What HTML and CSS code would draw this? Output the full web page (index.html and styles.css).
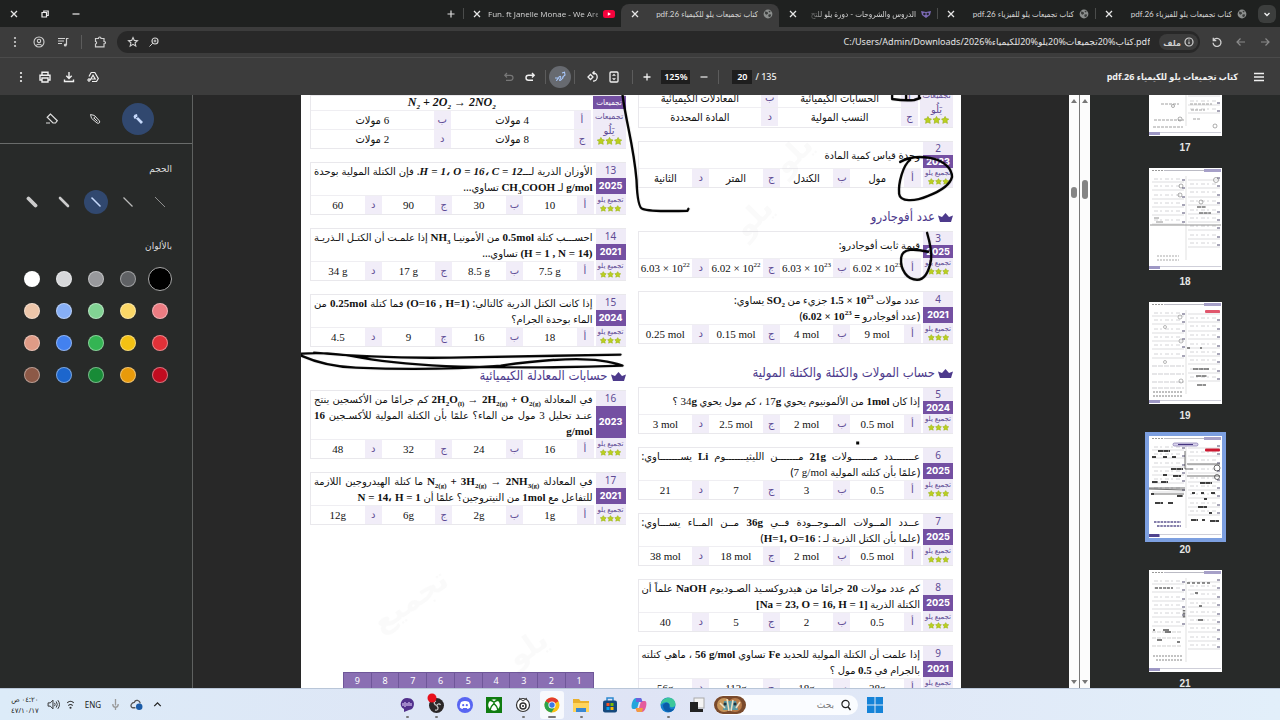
FILE: index.html
```html
<!DOCTYPE html>
<html lang="ar" dir="rtl">
<head>
<meta charset="utf-8">
<title>كتاب تجميعات يلو للكيمياء 26.pdf</title>
<link rel="stylesheet" href="styles.css">
</head>
<body>
<svg class="defs" aria-hidden="true">
  <symbol id="x" viewBox="0 0 10 10"><path d="M2 2l6 6M8 2l-6 6" fill="none" stroke="currentColor" stroke-width="1.3"/></symbol>
  <symbol id="globe" viewBox="0 0 10 10"><circle cx="5" cy="5" r="4.4" fill="#8c8f8e"/><path d="M2 2.5l2.5.4.6 1.6-1.5 1.2L2.2 5zM5.8 5.2l2.4.4-.6 2-1.6.7-.8-1.6zM6 1.4l1.8 1.4-1 .8L5.600 2.800z" fill="#3a3c3b"/></symbol>
  <symbol id="dots" viewBox="0 0 12 12"><circle cx="6" cy="2" r="1.100" fill="currentColor"/><circle cx="6" cy="6" r="1.100" fill="currentColor"/><circle cx="6" cy="10" r="1.100" fill="currentColor"/></symbol>
  <symbol id="star" viewBox="0 0 10 10"><path d="M5 .4l1.500 2.800 3.200.5-2.300 2.300.6 3.300L5 7.900 2 9.300l.6-3.300L.3 3.700l3.200-.5z" fill="#bccf1e" stroke="#98b41c" stroke-width=".8"/></symbol>
  <symbol id="stars" viewBox="0 0 32 10"><use href="#star" x="0" y="0" width="10" height="10"/><use href="#star" x="11" y="0" width="10" height="10"/><use href="#star" x="22" y="0" width="10" height="10"/></symbol>
  <symbol id="crown" viewBox="0 0 15 9"><path d="M0 2.500l4 1.500L7.500 0 11 4l4-1.500L13 9H2z" fill="#4d3a8c"/></symbol>
  <symbol id="thumb" viewBox="0 0 73 102">
    <rect width="73" height="102" fill="#fff"/>
    <path d="M15 2.500h40" stroke="#a9a9b5" stroke-width=".8"/><path d="M3 2.500h11" stroke="#999" stroke-width="1" stroke-dasharray="2 1"/>
    <rect x="55" y="1" width="17" height="3" fill="#a6a0c8"/>
    <path d="M0 98.500h72" stroke="#c3c3cf" stroke-width=".8"/><rect x="0" y="98" width="11" height="3" fill="#9d97c4"/>
    <path d="M37 8v84" stroke="#ccc" stroke-width=".6"/>
  </symbol>
  <symbol id="lines" viewBox="0 0 73 102">
    <g stroke="#b8b8bd" stroke-width=".5"><path d="M39 12h32M39 20h32M39 29h32M39 37h32M39 46h32M39 54h32M39 62h32M39 71h32M39 79h32"/><path d="M3 14h32M3 22h32M3 31h32M3 39h32M3 47h32M3 56h32"/></g>
    <g stroke="#c9c9cd" stroke-width=".8" stroke-dasharray="4 2 2 3"><path d="M41 16h28M41 24h28M41 33h28M41 42h28M41 50h28M41 58h28M41 67h28M41 75h28"/><path d="M5 11h28M5 18h28M5 27h28M5 35h28M5 43h28M5 52h28"/></g>
    <g stroke="#8b88a0" stroke-width="1.500"><path d="M68 10h3M68 18h3M68 27h3M68 35h3M68 44h3M68 52h3M68 60h3M68 69h3M68 77h3M33 12h3M33 20h3M33 29h3M33 37h3M33 45h3M33 54h3"/></g>
  </symbol>
</svg>

<header class="tabs">
  <button class="tab-search" aria-label="البحث في علامات التبويب"><svg viewBox="0 0 10 10"><path d="M2.500 4L5 6.500 7.500 4" fill="none" stroke="#eee" stroke-width="1.400"/></svg></button>
  <div class="tab"><svg><use href="#globe"/></svg><span>كتاب تجميعات يلو للفيزياء 26.pdf</span><button aria-label="إغلاق"><svg><use href="#x"/></svg></button></div>
  <div class="tab"><svg><use href="#globe"/></svg><span>كتاب تجميعات يلو للفيزياء 26.pdf</span><button aria-label="إغلاق"><svg><use href="#x"/></svg></button></div>
  <div class="tab tab-plain"><svg viewBox="0 0 10 10"><path d="M0 2l5 1 5-1-1 4-4 3-4-3z" fill="#7d6bb5"/><circle cx="3.400" cy="5" r="1.200" fill="#20222a"/><circle cx="6.700" cy="5" r="1.200" fill="#20222a"/></svg><span class="fade">الدروس والشروحات - دورة يلو للتح</span><button aria-label="إغلاق"><svg><use href="#x"/></svg></button></div>
  <div class="tab tab-active"><svg><use href="#globe"/></svg><span>كتاب تجميعات يلو للكيمياء 26.pdf</span><button aria-label="إغلاق"><svg><use href="#x"/></svg></button></div>
  <div class="tab"><svg class="yt" viewBox="0 0 12 10"><rect y="1" width="12" height="8" rx="2.500" fill="#f5033c"/><path d="M4.800 3.200v3.600L8 5z" fill="#fff"/></svg><span dir="ltr" class="fade-ltr">Fun. ft Janelle Monae - We Are</span><button aria-label="إغلاق"><svg><use href="#x"/></svg></button></div>
  <button class="new-tab" aria-label="علامة تبويب جديدة"><svg viewBox="0 0 10 10"><path d="M5 1.500v7M1.500 5h7" stroke="#ddd" stroke-width="1.200"/></svg></button>
  <div class="win">
    <button aria-label="تصغير"><svg viewBox="0 0 10 10"><path d="M1.500 5h7" stroke="#aaa" stroke-width="1.800"/></svg></button>
    <button aria-label="استعادة"><svg viewBox="0 0 10 10"><path d="M2 3.500h4.500v4.500H2zM3.800 3.300V2h4.400v4.500H6.700" fill="none" stroke="#eee" stroke-width="1.200"/></svg></button>
    <button aria-label="إغلاق"><svg><use href="#x"/></svg></button>
  </div>
</header>

<nav class="bar">
  <button class="dim" aria-label="للأمام"><svg viewBox="0 0 12 12"><path d="M2 6h8M6.500 2.500L10 6 6.500 9.500" fill="none" stroke="currentColor" stroke-width="1.200"/></svg></button>
  <button class="dim" aria-label="رجوع"><svg viewBox="0 0 12 12"><path d="M10 6H2M5.500 2.500L2 6l3.500 3.500" fill="none" stroke="currentColor" stroke-width="1.200"/></svg></button>
  <button aria-label="إعادة التحميل"><svg viewBox="0 0 12 12"><path d="M2.600 4.300A4 4 0 1 1 2 6.800M2.300 1.800v2.900h3" fill="none" stroke="currentColor" stroke-width="1.300"/></svg></button>
  <div class="omni">
    <button class="chip"><svg viewBox="0 0 12 12"><circle cx="6" cy="6" r="4" fill="none" stroke="currentColor" stroke-width="1.200"/><path d="M6 5.500v2.600M6 3.600v1" stroke="currentColor" stroke-width="1.200"/></svg>ملف</button>
    <span class="url" dir="ltr">C:/Users/Admin/Downloads/كتاب%20تجميعات%20يلو%20للكيمياء%2026.pdf</span>
    <button aria-label="تكبير"><svg viewBox="0 0 12 12"><circle cx="7" cy="5" r="3" fill="none" stroke="currentColor" stroke-width="1.200"/><path d="M4.800 7.200L1.500 10.500M7 3.600v2.800M5.600 5h2.800" stroke="currentColor"/></svg></button>
    <button aria-label="إشارة مرجعية"><svg viewBox="0 0 12 12"><path d="M6 1.500l1.300 2.900 3.200.3L8.100 6.800l.7 3.200L6 8.300 3.200 10l.7-3.200L1.500 4.700l3.200-.3z" fill="none" stroke="currentColor" stroke-width="1.100"/></svg></button>
  </div>
  <button aria-label="الإضافات"><svg viewBox="0 0 12 12"><path d="M1.500 2.500h3c0-2 2.500-2 2.500 0h3v3c2 0 2 2.300 0 2.300v3H1.500V8c1.500-.3 1.500-2.200 0-2.500z" fill="none" stroke="currentColor" stroke-width="1.200"/></svg></button>
  <i class="sep"></i>
  <button aria-label="الوسائط"><svg viewBox="0 0 12 12"><path d="M1 2.500h7M1 5h6M1 7.500h4M9.500 9V2.500h2" fill="none" stroke="currentColor" stroke-width="1.200"/><circle cx="8.300" cy="9" r="1.500" fill="currentColor"/></svg></button>
  <button aria-label="الملف الشخصي"><svg viewBox="0 0 12 12"><g fill="none" stroke="currentColor" stroke-width="1.100"><circle cx="6" cy="6" r="5"/><circle cx="6" cy="4.900" r="1.700"/><path d="M3.200 9.600c1-1.900 4.600-1.900 5.600 0"/></g></svg></button>
  <button aria-label="المزيد"><svg><use href="#dots"/></svg></button>
</nav>

<div class="pdfbar">
  <div class="pdf-title"><button aria-label="القائمة"><svg viewBox="0 0 12 12"><path d="M1 2.500h10M1 6h10M1 9.500h10" stroke="currentColor" stroke-width="1.500"/></svg></button><h1>كتاب تجميعات يلو للكيمياء 26.pdf</h1></div>
  <div class="pdf-mid" dir="ltr">
    <button class="dim" aria-label="تراجع"><svg viewBox="0 0 12 12"><path d="M4 2L1.800 4.300 4 6.500M2 4.300h5.500a2.500 2.500 0 0 1 0 5H3" fill="none" stroke="currentColor" stroke-width="1.200"/></svg></button>
    <button aria-label="إعادة"><svg viewBox="0 0 12 12"><path d="M8 2l2.200 2.300L8 6.500M10 4.300H4.500a2.500 2.500 0 0 0 0 5H9" fill="none" stroke="currentColor" stroke-width="1.400"/></svg></button>
    <i class="sep"></i>
    <button class="ink-on" aria-label="رسم"><svg viewBox="0 0 12 12"><path d="M1 7h3M2 9.500c2 0 3-5 4.500-4s-2 4-.5 4 2-2.500 3.500-3M8 2l2.500-.8L11 4 8.300 6.300" fill="none" stroke="#a8c7fa" stroke-width="1.100"/></svg></button>
    <i class="sep"></i>
    <div class="fit">
      <button aria-label="تدوير"><svg viewBox="0 0 12 12"><path d="M3.500 3.500L6 6 3.500 8.500 1 6zM6 1.800a4.200 4.200 0 1 1 0 8.400M7.500.3L5.800 1.900 7.500 3.500" fill="none" stroke="currentColor" stroke-width="1.300"/></svg></button>
      <button aria-label="ملاءمة الصفحة"><svg viewBox="0 0 12 12"><rect x="2" y="1" width="8" height="10" rx="1" fill="none" stroke="currentColor" stroke-width="1.300"/><path d="M4 4.800L6 2.800l2 2zM4 7.200l2 2 2-2z" fill="currentColor"/></svg></button>
    </div>
    <i class="sep"></i>
    <button class="plus" aria-label="تكبير"><svg viewBox="0 0 12 12"><path d="M6 2.500v7M2.500 6h7" stroke="currentColor" stroke-width="1.300"/></svg></button>
    <input class="zoom" aria-label="مستوى التكبير" value="125%">
    <button class="minus" aria-label="تصغير"><svg viewBox="0 0 12 12"><path d="M2.500 6h7" stroke="currentColor" stroke-width="1.200"/></svg></button>
    <i class="sep"></i>
    <span class="pages"><input aria-label="رقم الصفحة" value="20"> / 135</span>
  </div>
  <div class="pdf-end">
    <button aria-label="حفظ في Drive"><svg viewBox="0 0 12 12"><path d="M4.200 1.500h3.600l3.500 6-1.800 3H5M4.200 1.500L2 5.500M6 4.200L3.800 8h4.400zM0 9h4M2 7v4" fill="none" stroke="currentColor" stroke-width="1.200"/></svg></button>
    <button aria-label="تنزيل"><svg viewBox="0 0 12 12"><path d="M6 1v6M3.300 4.800L6 7.500l2.700-2.700M1.500 8.500v2h9v-2" fill="none" stroke="currentColor" stroke-width="1.400"/></svg></button>
    <button aria-label="طباعة"><svg viewBox="0 0 12 12"><path d="M3 4V1.300h6V4M3 9H1V4.300h10V9H9M3 7h6v4H3z" fill="none" stroke="currentColor" stroke-width="1.400"/></svg></button>
    <button aria-label="المزيد"><svg><use href="#dots"/></svg></button>
  </div>
</div>

<main class="viewer">
  <aside class="thumbs">
    <figure><svg viewBox="0 0 73 102"><use href="#thumb"/><use href="#lines"/><path d="M41 70h22M42 76h14M12 70h18M5 86h30M4 93h30M44 85h8" stroke="#888" stroke-width=".8" stroke-dasharray="3 1"/><g fill="none" stroke="#777" stroke-width=".6"><circle cx="31" cy="85" r="2"/><circle cx="66" cy="92" r="2"/><circle cx="24" cy="72" r="1.500"/></g></svg><figcaption>17</figcaption></figure>
    <figure><svg viewBox="0 0 73 102"><use href="#thumb"/><use href="#lines"/><rect x="1" y="58" width="35" height="38" fill="#fff"/><path d="M8 88h22M8 92h22" stroke="#aaa" stroke-width="1" stroke-dasharray="2 1"/><path d="M48 39h9M50 45h12" stroke="#333" stroke-width="1.200" stroke-dasharray="4 .6"/><path d="M5 50h5M7 54h7M1 57h71" stroke="#777" stroke-width=".8"/><g fill="none" stroke="#777" stroke-width=".6"><circle cx="67" cy="12" r="2.500"/><circle cx="32" cy="18" r="2"/><circle cx="31" cy="27" r="2"/><circle cx="52" cy="34" r="2"/></g></svg><figcaption>18</figcaption></figure>
    <figure><svg viewBox="0 0 73 102"><use href="#thumb"/><use href="#lines"/><g stroke="#b8b8bd" stroke-width=".7"><path d="M3 64h32M3 72h32M3 80h32M3 86h32" stroke-dasharray="5 1"/></g><rect x="56" y="8" width="15" height="3" rx="1" fill="#e0566c"/><path d="M44 67h16M47 74h11M48 83h9M38 46h3M51 46h2" stroke="#222" stroke-width="1.200" stroke-dasharray="5 .5"/><path d="M4 90h30M4 94h30" stroke="#aaa" stroke-width="1.500" stroke-dasharray="2 1"/><g fill="none" stroke="#888" stroke-width=".6"><circle cx="31" cy="15" r="2"/><circle cx="16" cy="25" r="1.500"/><circle cx="32" cy="39" r="2"/><circle cx="16" cy="60" r="1.500"/><circle cx="32" cy="79" r="2"/></g></svg><figcaption>19</figcaption></figure>
    <figure class="current"><svg viewBox="0 0 73 102"><use href="#thumb"/><use href="#lines"/><rect x="1" y="71" width="35" height="24" fill="#fff"/><rect x="24" y="7" width="25" height="3" rx="1.500" fill="#d9d3ec" stroke="#6d5f9f" stroke-width=".6"/><path d="M29 8.500h15" stroke="#443480" stroke-width="1"/><rect x="56" y="12.500" width="15" height="3" rx="1" fill="#cc1830"/><path d="M9 15h12M3 21h4M14 21h4M23 21h4M22 33h12M14 39h4M24 40h8M3 46h6M12 46h7M2 58h3M28 60h6M6 67h8M19 67h5M51 47h12M43 57h3M52 57h3M62 57h4M55 63h3M49 71h9M60 77h3M42 84h7M53 84h3M61 85h9" stroke="#000" stroke-width="1.500" stroke-dasharray="5 .4"/><path d="M0 52h36M0 53l36 1M3 58h32M36 15v18h8M38 28h33M38 40h33" stroke="#333" stroke-width=".7" fill="none"/><path d="M5 86h27M8 90h24" stroke="#5d5590" stroke-width="1.400" stroke-dasharray="2.500 .8"/><g fill="none" stroke="#333" stroke-width=".7"><circle cx="68" cy="32" r="3"/><circle cx="68" cy="41" r="2.500"/></g><rect y="98" width="10" height="3" fill="#4f438d"/></svg><figcaption>20</figcaption></figure>
    <figure><svg viewBox="0 0 73 102"><use href="#thumb"/><use href="#lines"/><path d="M3 62h30M3 68h30M3 76h30" stroke="#bbb" stroke-width=".7" stroke-dasharray="4 1"/><path d="M38 13h23" stroke="#222" stroke-width="1.200" stroke-dasharray="3 2"/><path d="M6 18h18" stroke="#333" stroke-width="1.200" stroke-dasharray="3 1"/><path d="M46 23h3M50 36h3M49 50h5M4 60h2M14 60h6M16 62h6M8 70h5M28 72h3" stroke="#555" stroke-width="1.400"/><path d="M4 86h30M7 90h27" stroke="#888" stroke-width="1" stroke-dasharray="2 1"/><path d="M35 40v8" stroke="#777" stroke-width="2.500" stroke-dasharray="1 .5"/></svg><figcaption>21</figcaption></figure>
  </aside>
  <div class="rail rail-a" aria-hidden="true"><i class="up"></i><b></b><i class="down"></i></div>
  <div class="rail rail-b" aria-hidden="true"><i class="up"></i><b></b><i class="down"></i></div>

  <section class="canvas">
    <div class="page">
      <div class="col">
        <article class="q q-wide q-cut">
          <div class="tag"><span class="src big">تجميعات<em>يَلُو</em><svg><use href="#stars"/></svg></span></div>
          <div class="body">
            <ul class="opts"><li><b>أ</b><span>الحسابات الكيميائية</span></li><li><b>ب</b><span>المعادلات الكيميائية</span></li></ul>
            <ul class="opts"><li><b>ج</b><span>النسب المولية</span></li><li><b>د</b><span>المادة المحددة</span></li></ul>
          </div>
        </article>
        <article class="q q-one">
          <div class="tag"><span class="num">2</span><span class="year">2023</span><span class="src">تجميع يلو<svg><use href="#stars"/></svg></span></div>
          <div class="body"><p><span>وحدة قياس كمية المادة</span></p>
            <ul class="opts"><li><b>أ</b><span>مول</span></li><li><b>ب</b><span>الكندل</span></li><li><b>ج</b><span>المتر</span></li><li><b>د</b><span>الثانية</span></li></ul></div>
        </article>
        <h2><svg><use href="#crown"/></svg>عدد أفوجادرو</h2>
        <article class="q q-one">
          <div class="tag"><span class="num">3</span><span class="year">2025</span><span class="src">تجميع يلو<svg><use href="#stars"/></svg></span></div>
          <div class="body"><p><span>قيمة ثابت أفوجادرو:</span></p>
            <ul class="opts"><li><b>أ</b><span dir="ltr">6.02 × 10<sup>23</sup></span></li><li><b>ب</b><span dir="ltr">6.03 × 10<sup>23</sup></span></li><li><b>ج</b><span dir="ltr">6.02 × 10<sup>22</sup></span></li><li><b>د</b><span dir="ltr">6.03 × 10<sup>22</sup></span></li></ul></div>
        </article>
        <article class="q">
          <div class="tag"><span class="num">4</span><span class="year">2021</span><span class="src">تجميع يلو<svg><use href="#stars"/></svg></span></div>
          <div class="body"><p><span>عدد مولات <bdi>1.5 × 10<sup>23</sup></bdi> جزيء من <bdi>SO<sub>2</sub></bdi> يساوي:</span><span>(عدد أفوجادرو = <bdi>6.02 × 10<sup>23</sup></bdi>)</span></p>
            <ul class="opts"><li><b>أ</b><span dir="ltr">9 mol</span></li><li><b>ب</b><span dir="ltr">4 mol</span></li><li><b>ج</b><span dir="ltr">0.15 mol</span></li><li><b>د</b><span dir="ltr">0.25 mol</span></li></ul></div>
        </article>
        <h2><svg><use href="#crown"/></svg>حساب المولات والكتلة والكتلة المولية</h2>
        <article class="q q-one">
          <div class="tag"><span class="num">5</span><span class="year">2024</span><span class="src">تجميع يلو<svg><use href="#stars"/></svg></span></div>
          <div class="body"><p><span>إذا كان <bdi>1mol</bdi> من الألمونيوم يحوي <bdi><i>17</i>g</bdi> ، كم مول يحوي <bdi><i>34</i>g</bdi> ؟</span></p>
            <ul class="opts"><li><b>أ</b><span dir="ltr">0.5 mol</span></li><li><b>ب</b><span dir="ltr">2 mol</span></li><li><b>ج</b><span dir="ltr">2.5 mol</span></li><li><b>د</b><span dir="ltr">3 mol</span></li></ul></div>
        </article>
        <article class="q">
          <div class="tag"><span class="num">6</span><span class="year">2025</span><span class="src">تجميع يلو<svg><use href="#stars"/></svg></span></div>
          <div class="body"><p><span class="full">عـــــــدد مـــــــولات <bdi>21g</bdi> مـــــــن الليثيـــــــوم <bdi>Li</bdi> يســـــــاوي:</span><span>(علمًا بأن كتلته المولية <bdi><i>7 g/mol</i></bdi>)</span></p>
            <ul class="opts"><li><b>أ</b><span>0.5</span></li><li><b>ب</b><span>3</span></li><li><b>ج</b><span>7</span></li><li><b>د</b><span>21</span></li></ul></div>
        </article>
        <article class="q">
          <div class="tag"><span class="num">7</span><span class="year">2025</span><span class="src">تجميع يلو<svg><use href="#stars"/></svg></span></div>
          <div class="body"><p><span class="full">عــدد المــولات المــوجــودة فــي <bdi>36g</bdi> مــن المــاء يســـاوي:</span><span>(علما بأن الكتل الذرية لـ : <bdi>H=1, O=16</bdi>)</span></p>
            <ul class="opts"><li><b>أ</b><span dir="ltr">0.5 mol</span></li><li><b>ب</b><span dir="ltr">2 mol</span></li><li><b>ج</b><span dir="ltr">18 mol</span></li><li><b>د</b><span dir="ltr">38 mol</span></li></ul></div>
        </article>
        <article class="q">
          <div class="tag"><span class="num">8</span><span class="year">2025</span><span class="src">تجميع يلو<svg><use href="#stars"/></svg></span></div>
          <div class="body"><p><span class="full">كم عدد مولات <bdi>20</bdi> جرامًا من هيدروكسـيد الصـوديوم <bdi>NaOH</bdi> علماً أن</span><span>الكتلة الذرية <bdi>[Na = 23, O = 16, H = 1]</bdi></span></p>
            <ul class="opts"><li><b>أ</b><span>0.5</span></li><li><b>ب</b><span>2</span></li><li><b>ج</b><span>5</span></li><li><b>د</b><span>40</span></li></ul></div>
        </article>
        <article class="q">
          <div class="tag"><span class="num">9</span><span class="year">2021</span><span class="src">تجميع يلو<svg><use href="#stars"/></svg></span></div>
          <div class="body"><p><span class="full">إذا علمت أن الكتلة المولية للحديد <bdi>Fe</bdi> تساوي <bdi>56 g/mol</bdi> ، ماهي كتلته</span><span>بالجرام في <bdi>0.5</bdi> مول ؟</span></p>
            <ul class="opts"><li><b>أ</b><span dir="ltr">28g</span></li><li><b>ب</b><span dir="ltr">18g</span></li><li><b>ج</b><span dir="ltr">112g</span></li><li><b>د</b><span dir="ltr">56g</span></li></ul></div>
        </article>
      </div>

      <div class="col">
        <article class="q q-wide">
          <div class="tag"><span class="year">تجميعات</span><span class="src big">تجميعات<em>يَلُو</em><svg><use href="#stars"/></svg></span></div>
          <div class="body"><p class="eq" dir="ltr">N<sub>2</sub> + 2O<sub>2</sub> → 2NO<sub>2</sub></p>
            <ul class="opts"><li><b>أ</b><span>4 مولات</span></li><li><b>ب</b><span>6 مولات</span></li></ul>
            <ul class="opts"><li><b>ج</b><span>8 مولات</span></li><li><b>د</b><span>2 مولات</span></li></ul>
          </div>
        </article>
        <article class="q">
          <div class="tag"><span class="num">13</span><span class="year">2025</span><span class="src">تجميع يلو<svg><use href="#stars"/></svg></span></div>
          <div class="body"><p><span class="full">الأوزان الذرية لـــ<bdi class="it">H = 1، O = 16، C = 12</bdi>. فإن الكتلة المولية بوحدة</span><span><bdi>g/mol</bdi> لـ <bdi>CH<sub>3</sub>COOH</bdi> تساوي...</span></p>
            <ul class="opts"><li><b>أ</b><span>10</span></li><li><b>ب</b><span>30</span></li><li><b>ج</b><span>90</span></li><li><b>د</b><span>60</span></li></ul></div>
        </article>
        <article class="q">
          <div class="tag"><span class="num">14</span><span class="year">2021</span><span class="src">تجميع يلو<svg><use href="#stars"/></svg></span></div>
          <div class="body"><p><span class="full">احســـب كتلة <bdi>0.5mol</bdi> من الأمونيـا <bdi>NH<sub>3</sub></bdi> إذا علمـت أن الكتـل الـذريـة</span><span><bdi>(H = 1 , N = 14)</bdi> تساوي...</span></p>
            <ul class="opts"><li><b>أ</b><span dir="ltr">7.5 g</span></li><li><b>ب</b><span dir="ltr">8.5 g</span></li><li><b>ج</b><span dir="ltr">17 g</span></li><li><b>د</b><span dir="ltr">34 g</span></li></ul></div>
        </article>
        <article class="q">
          <div class="tag"><span class="num">15</span><span class="year">2024</span><span class="src">تجميع يلو<svg><use href="#stars"/></svg></span></div>
          <div class="body"><p><span class="full">إذا كانت الكتل الذرية كالتالي: <bdi>(O=16 , H=1)</bdi> فما كتلة <bdi>0.25mol</bdi> من</span><span>الماء بوحدة الجرام؟</span></p>
            <ul class="opts"><li><b>أ</b><span>18</span></li><li><b>ب</b><span>16</span></li><li><b>ج</b><span>9</span></li><li><b>د</b><span>4.5</span></li></ul></div>
        </article>
        <h2><svg><use href="#crown"/></svg>حسابات المعادلة الكيميائية</h2>
        <article class="q">
          <div class="tag"><span class="num">16</span><span class="year">2023</span><span class="src">تجميع يلو<svg><use href="#stars"/></svg></span></div>
          <div class="body"><p><span class="full">في المعادلة <bdi>2H<sub>2</sub>O<sub>(l)</sub> → 2H<sub>2(g)</sub> + O<sub>2(g)</sub></bdi> كم جرامًا من الأكسجين ينتج</span><span class="full">عنـد تحليل <bdi><i>3</i></bdi> مول من الماء؟ علمًا بأن الكتلة المولية للأكسـجين <bdi>16</bdi></span><span><bdi>g/mol</bdi></span></p>
            <ul class="opts"><li><b>أ</b><span>16</span></li><li><b>ب</b><span>24</span></li><li><b>ج</b><span>32</span></li><li><b>د</b><span>48</span></li></ul></div>
        </article>
        <article class="q">
          <div class="tag"><span class="num">17</span><span class="year">2021</span><span class="src">تجميع يلو<svg><use href="#stars"/></svg></span></div>
          <div class="body"><p><span class="full">في المعادلة <bdi>N<sub>2(g)</sub> + 3H<sub>2(g)</sub> → 2NH<sub>3(g)</sub></bdi> ما كتلة الهيدروجين اللازمة</span><span>للتفاعل مع <bdi>1mol</bdi> من النيتروجين؟ علمًا أن <bdi>N = 14، H = 1</bdi></span></p>
            <ul class="opts"><li><b>أ</b><span dir="ltr">1g</span></li><li><b>ب</b><span dir="ltr">2g</span></li><li><b>ج</b><span dir="ltr">6g</span></li><li><b>د</b><span dir="ltr">12g</span></li></ul></div>
        </article>
        <table class="answers"><tr><th>1</th><th>2</th><th>3</th><th>4</th><th>5</th><th>6</th><th>7</th><th>8</th><th>9</th></tr></table>
      </div>

      <svg class="ink" viewBox="0 0 661 593" aria-hidden="true">
        <g class="mark"><text x="515" y="52" transform="rotate(-45 515 52)">يلو</text><text x="475" y="115" transform="rotate(-45 475 115)">يلو</text><text x="150" y="490" transform="rotate(-35 150 490)">تجميع</text><text x="250" y="550" transform="rotate(-35 250 550)">يلو</text></g>
        <g fill="none" stroke="#000" stroke-width="2.400" stroke-linecap="round" stroke-linejoin="round">
          <path d="M322 0C326 30 333 50 336 85Q337 113 342 114Q350 117 387 116L388 114"/>
          <path d="M592 0v4Q605 6 614 5L620 3M606 0v4M619 0v3"/>
          <path d="M600 67Q612 60 630 63C645 66 652 74 652 82C650 90 641 96 628 101C614 107 600 107 599 99C598 88 603 70 610 65"/>
          <path d="M627 138Q632 155 631 165C629 176 625 185 617 185C607 185 600 175 601 163C602 153 615 154 628 157"/>
          <path d="M13 258Q80 264 150 263L320 260M0 261Q25 272 55 273C100 275 150 275 200 271C250 264 280 263 300 266Q314 268 322 271Q240 274 160 272Q100 270 60 263Q30 257 0 259"/>
        </g>
        <rect x="556" y="347" width="3" height="3" fill="#000"/>
      </svg>
    </div>
  </section>

  <aside class="tools">
    <div class="tool-row">
      <button class="on" aria-label="قلم"><svg viewBox="0 0 12 12"><path d="M1.500 3.500l1-1.800L5 1l.5 2.500L11 9 9 11 3.800 5.500l-1.500.3z" fill="#c6d9fb"/><path d="M4 5l3-2" stroke="#31486f"/></svg></button>
      <button aria-label="قلم تمييز"><svg viewBox="0 0 12 12"><path d="M1.500 1.500l4 1L10.500 8c1 1.500-1 3-2.500 2L2.500 5.300zM4.500 5l2-1.500M5 5l3.500 3.500" fill="none" stroke="currentColor"/></svg></button>
      <button aria-label="ممحاة"><svg viewBox="0 0 12 12"><path d="M4.500 1L1.200 4.300 7 10h2.500L11.300 7.700zM0 10h4" fill="none" stroke="currentColor" stroke-width="1.200"/></svg></button>
    </div>
    <h3>الحجم</h3>
    <div class="grid">
      <button aria-label="1"><svg viewBox="0 0 12 12"><path d="M1 1l10 10" stroke="#aaa" stroke-width=".8"/></svg></button>
      <button aria-label="2"><svg viewBox="0 0 12 12"><path d="M1.500 1.500l9 9" stroke="#bbb" stroke-width="1.200"/></svg></button>
      <button class="on" aria-label="3"><svg viewBox="0 0 12 12"><path d="M2 2l8 8" stroke="#c6d9fb" stroke-width="1.600" stroke-linecap="round"/></svg></button>
      <button aria-label="4"><svg viewBox="0 0 12 12"><path d="M2 2l8 8" stroke="#ccc" stroke-width="2.600" stroke-linecap="round"/></svg></button>
      <button aria-label="5"><svg viewBox="0 0 12 12"><path d="M2.500 2.500l7 7" stroke="#ccc" stroke-width="3.800" stroke-linecap="round"/></svg></button>
    </div>
    <h3>بالألوان</h3>
    <div class="grid">
      <button class="sw big black" aria-label="أسود"></button><button class="sw g3" aria-label="رمادي داكن"></button><button class="sw g2" aria-label="رمادي"></button><button class="sw g1" aria-label="رمادي فاتح"></button><button class="sw white" aria-label="أبيض"></button>
      <button class="sw r1" aria-label="أحمر فاتح"></button><button class="sw y1" aria-label="أصفر فاتح"></button><button class="sw n1" aria-label="أخضر فاتح"></button><button class="sw b1" aria-label="أزرق فاتح"></button><button class="sw t1" aria-label="بيج"></button>
      <button class="sw r2" aria-label="أحمر"></button><button class="sw y2" aria-label="أصفر"></button><button class="sw n2" aria-label="أخضر"></button><button class="sw b2" aria-label="أزرق"></button><button class="sw t2" aria-label="بني فاتح"></button>
      <button class="sw r3" aria-label="أحمر داكن"></button><button class="sw y3" aria-label="برتقالي"></button><button class="sw n3" aria-label="أخضر داكن"></button><button class="sw b3" aria-label="أزرق داكن"></button><button class="sw t3" aria-label="بني"></button>
    </div>
  </aside>
</main>

<footer class="taskbar">
  <div class="apps">
    <button aria-label="ابدأ"><svg viewBox="0 0 16 16"><path d="M0 0h7.500v7.500H0zM8.500 0H16v7.500H8.500zM0 8.500h7.500V16H0zM8.500 8.500H16V16H8.500z" fill="#1583d8"/></svg></button>
    <label class="search"><svg viewBox="0 0 12 12"><circle cx="5.500" cy="5" r="3.600" fill="none" stroke="#222" stroke-width="1.200"/><path d="M8 7.800l2.500 3.200" stroke="#222" stroke-width="1.400"/></svg><input aria-label="بحث" placeholder="بحث"><svg class="art" viewBox="0 0 32 18"><rect width="32" height="18" rx="9" fill="#7a4a2c"/><circle cx="10" cy="9" r="7" fill="#c79559"/><circle cx="21" cy="9" r="7" fill="#b77b49"/><path d="M10 5h12l2 9H9z" fill="#5c9aa3"/><path d="M13 3l2 12M19 4l-2 11M6 7l5 5M26 6l-4 6" stroke="#f0dfc0" stroke-width="1.500"/><circle cx="11" cy="8" r="1.500" fill="#24343d"/><circle cx="21" cy="8" r="1.500" fill="#24343d"/></svg></label>
    <button aria-label="عرض المهام"><svg viewBox="0 0 16 16"><rect x="5" y="1" width="10" height="10" fill="#f4f4f4" stroke="#aaa"/><path d="M1 5h8v7h5v3H1z" fill="#222"/></svg></button>
    <button class="run" aria-label="Edge"><svg viewBox="0 0 16 16"><circle cx="8" cy="8" r="7.500" fill="#1780cf"/><path d="M.6 8C1-1 15-2 15.500 7c0 4-5 4-6 2 1-3-4-6-8.900-1z" fill="#3dc79a"/><path d="M3 8c3-4 7-2 6.500.8-1 3 3 4.500 5 2.700C12 17 3 16 3 8z" fill="#0c5ba8"/></svg></button>
    <button aria-label="Copilot"><svg viewBox="0 0 16 16"><path d="M5 1h5l1.500 4H8L6 12H2C-1 12 1 1 5 1z" fill="#23a5dc"/><path d="M11 15H6l-1.500-4H8l2-7h4c3 0 1 11-3 11z" fill="#e45c9c"/><path d="M5 1h5l1.500 4H5z" fill="#6d62dc"/><path d="M6 15h5l1-4H4.500z" fill="#f29b42"/></svg></button>
    <button aria-label="المتجر"><svg viewBox="0 0 16 16"><path d="M5 4V1h6v3" fill="none" stroke="#2d88cf" stroke-width="1.500"/><rect x="1" y="3.500" width="14" height="12" rx="2" fill="#15487c"/><path d="M4.500 6h3v3h-3z" fill="#f25022"/><path d="M8.500 6h3v3h-3z" fill="#7fba00"/><path d="M4.500 10h3v3h-3z" fill="#00a4ef"/><path d="M8.500 10h3v3h-3z" fill="#ffb900"/></svg></button>
    <button class="run" aria-label="مستكشف الملفات"><svg viewBox="0 0 16 16"><path d="M0 2h6l1.500 2H16v11H0z" fill="#eab02c"/><path d="M0 6h16v9H0z" fill="#ffd45c"/><path d="M3 11h10v4H3z" fill="#3987d2"/></svg></button>
    <button class="run active" aria-label="Chrome"><svg viewBox="0 0 16 16"><circle cx="8" cy="8" r="7.500" fill="#fbc116"/><path d="M8 8L1.500 4.200A7.500 7.500 0 0 1 14.500 4.200z" fill="#e33b2e"/><path d="M8 8L1.500 4.200A7.500 7.500 0 0 0 7.500 15.500L11 10z" fill="#2ba24c"/><circle cx="8" cy="8" r="3.600" fill="#fff"/><circle cx="8" cy="8" r="2.700" fill="#3b78e7"/></svg></button>
    <button class="run" aria-label="مسجل"><svg viewBox="0 0 16 16"><circle cx="8" cy="8" r="6.500" fill="#fff" stroke="#333" stroke-width="1.200"/><circle cx="8" cy="9" r="3" fill="none" stroke="#333" stroke-width="1.500"/><path d="M4 1l4 3 4-3" fill="none" stroke="#444"/><circle cx="8" cy="9" r="1" fill="#222"/></svg></button>
    <button aria-label="Xbox"><svg viewBox="0 0 16 16"><rect width="16" height="16" fill="#107c10"/><circle cx="8" cy="8" r="5.800" fill="#fff"/><path d="M4 3.500c1.500-.4 3 .7 4 1.700 1-1 2.500-2.100 4-1.700M4 13c.3-2.500 2.300-5 4-6.500 1.700 1.500 3.700 4 4 6.500" fill="none" stroke="#107c10" stroke-width="1.500"/></svg></button>
    <button aria-label="Discord"><svg viewBox="0 0 16 16"><circle cx="8" cy="8" r="8" fill="#5865f2"/><path d="M4 5q4-1.800 8 0 1.500 3 1.200 5.500Q12 11.800 10.500 12L9.800 11H6.200l-.7 1Q4 11.800 2.800 10.500 2.500 8 4 5z" fill="#fff"/><circle cx="6.200" cy="8.200" r="1.100" fill="#5865f2"/><circle cx="9.800" cy="8.200" r="1.100" fill="#5865f2"/></svg></button>
    <button class="run" aria-label="OBS"><svg viewBox="0 0 16 16"><circle cx="8.500" cy="8.500" r="7.500" fill="#2a2728"/><path d="M8 4c-3 1-2 4 1 4.500M12.500 8c-1-2-4-1-3.500 1.500M7 13c3 1 4-2 2-4" fill="none" stroke="#ccc" stroke-width="1.200"/><circle class="rec" cx="4" cy="1" r="4.500" fill="#e8101c"/></svg></button>
    <button class="run" aria-label="دردشة"><svg viewBox="0 0 16 16"><path d="M8 1c10 0 8 12 2 12l-5 2v-3C-1 9 2 1 8 1z" fill="#51308c"/><path d="M4 6v3M6 5v5M8 6v3M10 5v4M12 6v3" stroke="#d3bff0" stroke-width="1.200"/></svg></button>
  </div>
  <div class="tray">
    <button aria-label="الرموز المخفية"><svg viewBox="0 0 12 12"><path d="M3 7.500l3-3 3 3" fill="none" stroke="#222" stroke-width="1.200"/></svg></button>
    <button aria-label="OneDrive"><svg viewBox="0 0 12 12"><path d="M2 9C-.5 7 2 4 4 4c1-3 5-2 5.500 1M2 9h3" fill="none" stroke="#555" stroke-width="1.200"/><circle cx="8.500" cy="8" r="3" fill="#1b5ca8"/></svg></button>
    <button aria-label="الميكروفون"><svg viewBox="0 0 12 12"><path d="M6 1v6M3.500 5.500c0 4 5 4 5 0M6 9v2" fill="none" stroke="#999" stroke-width="1.200"/></svg></button>
    <button class="lang">ENG</button>
    <button class="net" aria-label="الشبكة والصوت"><svg viewBox="0 0 12 12"><path d="M3 4.500q3-3 6 0M4 7q2-2 4 0" fill="none" stroke="#333"/><circle cx="6" cy="9" r="1" fill="#333"/></svg><svg viewBox="0 0 12 12"><path d="M1 4.500h2L5.500 2v8L3 7.500H1zM7 4.500q1 1.500 0 3M8.500 3.200q2 2.800 0 5.600M10 2q3 4 0 8" fill="none" stroke="#333" stroke-width=".9"/></svg></button>
    <button class="clock"><span>٠٤:٢٠ ص</span><span>٤٧/١٠/١٧</span></button>
  </div>
</footer>
</body>
</html>
```
FILE: styles.css
```css
* { box-sizing: border-box; }
html, body { height: 100%; }
body {
  margin: 0;
  display: flex;
  flex-direction: column;
  overflow: hidden;
  background: #282828;
  color: #e6e6e6;
  font-family: "Noto Sans", "DejaVu Sans", sans-serif;
  font-size: 10px;
}
.defs { display: none; }
button { border: 0; padding: 0; margin: 0; background: none; color: inherit; font: inherit; display: flex; align-items: center; justify-content: center; }
h1, h2, h3, p, ul, figure { margin: 0; padding: 0; }
ul { list-style: none; }
svg { display: block; flex: none; }

/* tab strip */
.tabs { flex: none; height: 27px; display: flex; align-items: center; padding: 0 4px 0 9px; background: #1f2120; }
.tab-search { width: 18px; height: 18px; border-radius: 6px; background: #3c3e3d; margin-left: 5px; }
.tab-search svg, .new-tab svg, .win svg { width: 10px; height: 10px; }
.tab { width: 158px; height: 27px; display: flex; align-items: center; padding: 0 6px 0 9px; border-radius: 8px 8px 0 0; }
.tab svg { width: 10px; height: 10px; }
.tab .yt { width: 12px; }
.tab span { flex: 1; min-width: 0; margin: 0 5px 0 6px; overflow: hidden; white-space: nowrap; font-family: "Lato", "DejaVu Sans Condensed", "DejaVu Sans", sans-serif; font-size: 8px; line-height: 20px; color: #d5d5d5; }
.tab .fade { mask-image: linear-gradient(to left, #000 80%, transparent); }
.tab .fade-ltr { font-family: "Open Sans", sans-serif; mask-image: linear-gradient(to right, #000 90%, #0008); }
.tab:not(.tab-active):not(.tab-plain) { border-image: linear-gradient(transparent 8px, #4a4c4b 8px, #4a4c4b 19px, transparent 19px) 1; border-left: 1px solid; padding-left: 8px; }
.tab-active { background: #3c3c3c; align-self: flex-end; height: 23px; padding-bottom: 3px; }
.new-tab { width: 24px; height: 20px; }
.win { margin-right: auto; display: flex; gap: 21px; }

/* address bar */
.bar { flex: none; height: 31px; display: flex; align-items: center; gap: 12px; padding: 0 9px; background: #3c3c3c; border-bottom: 1px solid #4b4b4b; color: #d0d0d0; }
.bar svg, .pdfbar svg { width: 12px; height: 12px; }
.dim { color: #8a8a8a; }
.omni { flex: 1; min-width: 0; height: 22px; display: flex; align-items: center; gap: 9px; padding: 0 2px 0 10px; margin: 0 -1px; border-radius: 11px; background: #282828; }
.chip { height: 16px; padding: 0 3px 0 4px; gap: 2px; border-radius: 8px; background: #3c3c3c; font-size: 8px; font-weight: 600; }
.url { flex: 1; min-width: 0; overflow: hidden; white-space: nowrap; text-align: right; font-size: 9px; line-height: 20px; color: #e3e3e3; }
.sep { width: 1px; height: 14px; background: #5c5c5c; }

/* document toolbar */
.pdfbar { flex: none; height: 37px; display: flex; align-items: center; background: #3c3c3c; padding: 0 15px; color: #f0f0f0; }
.pdf-title, .pdf-end { flex: 1; display: flex; align-items: center; }
.pdf-title { gap: 15px; }
.pdf-title h1 { font: 700 9px/20px "Open Sans", "DejaVu Sans Condensed", "DejaVu Sans", sans-serif; white-space: nowrap; }
.pdf-end { justify-content: flex-end; gap: 12px; }
.pdf-mid { display: flex; align-items: center; gap: 9px; }
.pdf-mid .dim { color: #777; }
.ink-on { width: 22px; height: 22px; border-radius: 50%; background: #676a70; margin: 0 -6px; }
.fit { display: flex; gap: 9px; padding: 0 3px; }
.pdf-mid .plus, .pdf-mid .minus { margin: 0 -1px; }
.pdf-mid input { border: 0; padding: 0; height: 14px; width: 20px; background: #1e1e1e; color: #fff; text-align: center; font: 600 9px "Noto Sans", sans-serif; }
.pdf-mid .zoom { width: 29px; }
.pages { display: flex; align-items: center; gap: 3px; white-space: nowrap; margin-left: 4px; font-size: 9px; font-weight: 500; }

/* viewer */
.viewer { flex: 1; min-height: 0; display: flex; overflow: hidden; }
.thumbs { width: 190px; flex: none; display: flex; flex-direction: column; align-items: center; overflow: hidden; background: #282a29; }
.thumbs figure { flex: none; height: 134px; display: flex; flex-direction: column; align-items: center; }
.thumbs figure:first-child { margin-top: -61px; }
.thumbs svg { width: 73px; height: 102px; }
.thumbs figcaption { font: 600 10px/24px "Liberation Sans", sans-serif; }
.current svg { outline: 4px solid #7c9fe0; }
.rail { width: 11px; flex: none; background: #fcfcfc; display: flex; flex-direction: column; align-items: center; border-left: 1px solid #777; padding: 4px 0; }
.rail b { width: 6px; border-radius: 3px; background: #858585; }
.rail-a b { height: 19px; margin-top: 77px; }
.rail-b { width: 10px; border-left: 0; }
.rail-b b { height: 11px; margin-top: 84px; }
.up, .down { border: 3px solid transparent; }
.up { border-top: 0; border-bottom: 4px solid #777; }
.down { border-bottom: 0; border-top: 4px solid #777; margin-top: auto; }
.canvas { flex: 1; min-width: 0; padding: 0 108px; background: #282828; overflow: hidden; }
.page { position: relative; height: 100%; display: flex; gap: 12px; padding: 0 8px 0 9px; background: #fff; color: #111; overflow: hidden; }
.col { flex: 1; min-width: 0; }
.ink { position: absolute; top: 0; left: 0; width: 100%; height: auto; pointer-events: none; }
.mark { fill: #000; opacity: .02; font: 700 30px "Noto Sans", "DejaVu Sans", sans-serif; }

.q { display: flex; gap: 2px; margin-bottom: 13px; border: 1px solid #e9e8ec; border-right: 0; }
.q-cut { margin-top: -7px; border-top: 0; }
.tag { width: 30px; flex: none; display: flex; flex-direction: column; text-align: center; background: #efebf7; color: #5d4a94; overflow: hidden; }
.q-wide .tag { width: 33px; }
.num { height: 15px; line-height: 15px; font-size: 10px; }
.year { flex: 1; display: flex; align-items: center; justify-content: center; background: #7450a2; color: #fff; font: 800 9px/10px "Inter", "Noto Sans", sans-serif; overflow: hidden; }
.q-wide .year { font: 8px/10px "DejaVu Sans Condensed", "DejaVu Sans", sans-serif; }
.src { height: 20px; display: flex; flex-direction: column; align-items: center; font-size: 7px; line-height: 11px; white-space: nowrap; overflow: hidden; }
.src svg { width: 21px; height: 7px; }
.src.big { height: 39px; font-size: 8px; line-height: 14px; margin-top: auto; }
.src.big em { font-style: normal; font-size: 10px; line-height: 14px; }
.src.big svg { width: 25px; height: 8px; }
.q-one .num { height: 13px; line-height: 13px; }
.q-one .src { height: 19px; line-height: 10px; }
.body { flex: 1; min-width: 0; display: flex; flex-direction: column; }
.body p { min-height: 26px; display: flex; flex-direction: column; justify-content: center; padding: 0 1px 0 3px; font-size: 10px; line-height: 16px; font-weight: 500; }
.body p > span { height: 16px; white-space: nowrap; }
.body p .full { text-align: justify; text-align-last: justify; }
.body bdi { font-family: "Liberation Serif", "Noto Sans", serif; font-weight: 700; font-size: 11px; direction: ltr; }
.body bdi i { font-style: normal; font-weight: 400; }
.body .it { font-style: italic; }
sub, sup { font-size: 7px; line-height: 0; }
.body p.eq { display: block; min-height: 14px; text-align: center; font: italic 700 12px/12px "Liberation Serif", serif; }
.opts { display: flex; border-top: 1px solid #efeef2; }
.opts li { flex: 1; min-width: 0; height: 18px; display: flex; align-items: center; }
.opts b { width: 17px; height: 18px; line-height: 16px; text-align: center; font-weight: 400; background: #f1edf8; color: #5d4a94; }
.opts span { flex: 1; min-width: 0; white-space: nowrap; text-align: center; font-family: "Liberation Serif", "DejaVu Sans Condensed", "DejaVu Sans", serif; font-size: 11px; line-height: 16px; }
h2 { display: flex; align-items: center; gap: 3px; height: 26px; padding-top: 6px; margin-bottom: 4px; color: #4d3a8c; font: 500 13px/20px "DejaVu Sans Condensed", "DejaVu Sans", sans-serif; white-space: nowrap; }
h2 svg { width: 15px; height: 9px; }
.answers { width: calc(100% - 65px); margin: 147px 32px 0; border-collapse: collapse; table-layout: fixed; }
.answers th { height: 16px; padding: 0; background: #8a6fb3; color: #fff; border: 1px solid #6f5799; font-size: 9px; line-height: 12px; font-weight: 400; }

/* drawing tools */
.tools { width: 193px; flex: none; background: #282a29; border-right: 1px solid #5f6160; color: #ddd; }
.tool-row { height: 49px; display: flex; align-items: center; gap: 11px; padding-right: 38px; border-bottom: 1px solid #6a6c6b; }
.tool-row button { width: 32px; height: 32px; border-radius: 50%; }
.tools svg { width: 12px; height: 12px; }
.tools .on { background: #31486f; }
.tools h3 { font: 500 9px/20px "Noto Sans", "DejaVu Sans", sans-serif; padding: 15px 20px 7px 0; }
.tools .grid + h3 { padding-top: 18px; }
.grid { display: grid; grid-template-columns: repeat(5, 32px); grid-auto-rows: 32px; padding-right: 16px; place-items: center; }
.grid button { width: 24px; height: 24px; border-radius: 50%; }
.grid .sw { width: 16px; height: 16px; border: 1px solid #ffffff66; }
.grid .big { width: 24px; height: 24px; border-color: #aaa; }
.black { background: #000; } .g3 { background: #5f6164; } .g2 { background: #98999c; } .g1 { background: #d6d7d9; } .white { background: #fff; }
.r1 { background: #ec7c82; } .y1 { background: #fbd767; } .n1 { background: #82d394; } .b1 { background: #87aff6; } .t1 { background: #edc6aa; }
.r2 { background: #e03138; } .y2 { background: #f3c114; } .n2 { background: #34b453; } .b2 { background: #4381ef; } .t2 { background: #df9b86; }
.r3 { background: #c00c20; } .y3 { background: #e89a0b; } .n3 { background: #188b37; } .b3 { background: #1c66cd; } .t3 { background: #8c5947; }

/* taskbar */
.taskbar { flex: none; height: 32px; display: flex; align-items: center; justify-content: space-between; background: linear-gradient(to right, #dcebf8, #dfe4f5 50%, #e2effa); border-top: 1px solid #b9c6d8; color: #222; padding-right: 393px; }
.apps { display: flex; align-items: center; gap: 5px; }
.apps button { width: 24px; height: 28px; position: relative; }
.apps button svg { width: 16px; height: 16px; overflow: visible; }
.apps .active { background: #f7f9fd; border-radius: 3px; }
.run::after { content: ""; position: absolute; bottom: 1px; left: 11px; width: 3px; height: 2px; border-radius: 1px; background: #777; }
.active::after { left: 8px; width: 8px; }
.search { width: 144px; height: 20px; display: flex; align-items: center; gap: 6px; padding: 0 6px 0 0; border-radius: 10px; background: #fafcff; }
.search svg { width: 12px; height: 12px; }
.search input { flex: 1; min-width: 0; border: 0; padding: 0; background: none; font: 9px "Noto Sans", "DejaVu Sans", sans-serif; }
.search input::placeholder { color: #777; }
.search .art { width: 32px; height: 18px; }
.tray { display: flex; align-items: center; gap: 8px; padding-left: 11px; white-space: nowrap; }
.tray svg { width: 13px; height: 13px; }
.lang { font-size: 8px; }
.net { gap: 4px; }
.clock { flex-direction: column; font-size: 7px; line-height: 11px; }
```
